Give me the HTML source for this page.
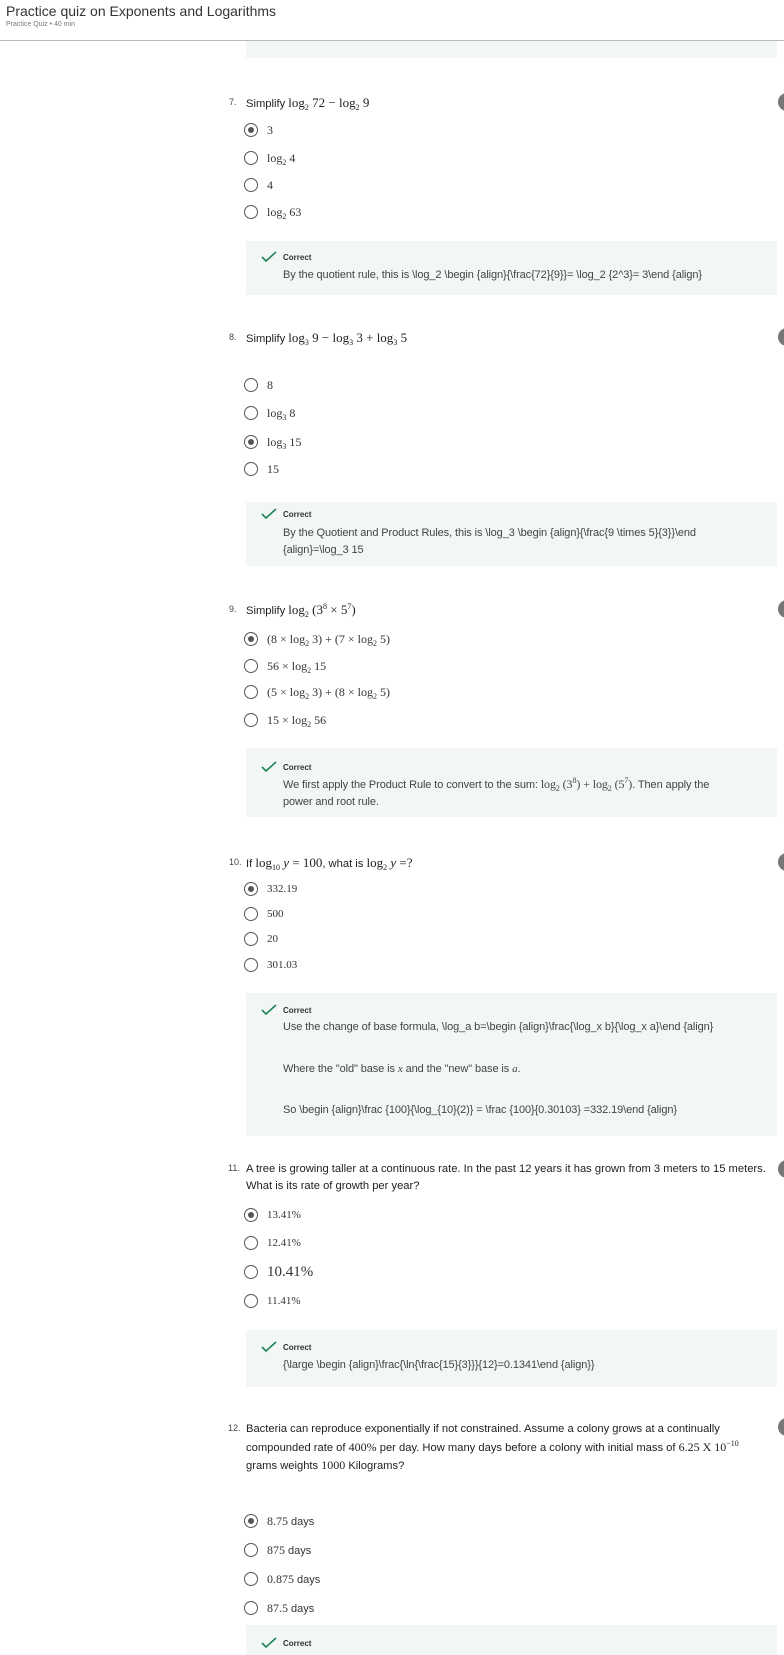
<!DOCTYPE html>
<html><head><meta charset="utf-8"><style>
*{margin:0;padding:0;box-sizing:border-box}
body{width:784px;height:1651px;position:relative;background:#fff;overflow:hidden;font-family:"Liberation Sans",sans-serif;color:#333}
.a{position:absolute;white-space:nowrap;line-height:16px}
.q{font-size:11.2px;color:#222}
.n{font-size:9px;color:#444}
.m{font-family:"Liberation Serif",serif;font-size:13px}
sub{font-size:8px;vertical-align:-3px;line-height:0}
sup{font-size:8px;vertical-align:5px;line-height:0}
.o{position:absolute;left:267px;font-size:12px;line-height:16px;font-family:"Liberation Serif",serif;color:#333;white-space:nowrap}
.o .s{font-family:"Liberation Sans",sans-serif;font-size:11px}
.r{position:absolute;left:244px;width:14px;height:14px;border:1.5px solid #555;border-radius:50%}
.r.on::after{content:"";position:absolute;left:2.5px;top:2.5px;width:6px;height:6px;border-radius:50%;background:#555}
.fb{position:absolute;left:246px;width:531px;background:#f2f7f5}
.ck{position:absolute;left:261px;width:16px;height:12px}
.c{position:absolute;left:283px;font-size:8px;font-weight:bold;color:#333}
.t{position:absolute;left:283px;font-size:11px;letter-spacing:-0.1px;color:#444;line-height:17px;white-space:nowrap}
.g{position:absolute;left:778px;width:18px;height:18px;border-radius:50%;background:#777}
</style></head><body>
<div class="a" style="left:6px;top:3px;font-size:14px;color:#333">Practice quiz on Exponents and Logarithms</div>
<div class="a" style="left:6px;top:17px;font-size:7px;color:#777">Practice Quiz • 40 min</div>
<div class="fb" style="top:41px;height:17px"></div>
<div class="a m" style="left:283px;top:30px;font-size:11px;color:#555">x = 2</div>
<div style="position:absolute;left:0;top:0;width:784px;height:40px;background:#fff;z-index:1"></div>
<div class="a" style="left:6px;top:3px;font-size:14px;color:#333;z-index:2">Practice quiz on Exponents and Logarithms</div>
<div class="a" style="left:6px;top:17px;font-size:7px;color:#777;z-index:2">Practice Quiz • 40 min</div>
<div style="position:absolute;left:0;top:40px;width:784px;height:1px;background:#bbb;z-index:2"></div>

<!-- Q7 -->
<div class="a n" style="left:229px;top:94px">7.</div>
<div class="a q" style="left:246px;top:95px">Simplify <span class="m">log<sub>2</sub> 72 − log<sub>2</sub> 9</span></div>
<div class="g" style="top:93px"></div>
<div class="r on" style="top:123px"></div><div class="o" style="top:122px">3</div>
<div class="r" style="top:151px"></div><div class="o" style="top:150px">log<sub>2</sub> 4</div>
<div class="r" style="top:178px"></div><div class="o" style="top:177px">4</div>
<div class="r" style="top:205px"></div><div class="o" style="top:204px">log<sub>2</sub> 63</div>
<div class="fb" style="top:241px;height:54px"></div>
<svg class="ck" style="top:251px" viewBox="0 0 16 12"><path d="M1 6l4 4 10-9" fill="none" stroke="#1f8354" stroke-width="1.6"/></svg>
<div class="a c" style="top:250px">Correct</div>
<div class="t" style="top:267px">By the quotient rule, this is \log_2 \begin {align}{\frac{72}{9}}= \log_2 {2^3}= 3\end {align}</div>

<!-- Q8 -->
<div class="a n" style="left:229px;top:329px">8.</div>
<div class="a q" style="left:246px;top:330px">Simplify <span class="m">log<sub>3</sub> 9 − log<sub>3</sub> 3 + log<sub>3</sub> 5</span></div>
<div class="g" style="top:328px"></div>
<div class="r" style="top:378px"></div><div class="o" style="top:377px">8</div>
<div class="r" style="top:406px"></div><div class="o" style="top:405px">log<sub>3</sub> 8</div>
<div class="r on" style="top:435px"></div><div class="o" style="top:434px">log<sub>3</sub> 15</div>
<div class="r" style="top:462px"></div><div class="o" style="top:461px">15</div>
<div class="fb" style="top:502px;height:64px"></div>
<svg class="ck" style="top:508px" viewBox="0 0 16 12"><path d="M1 6l4 4 10-9" fill="none" stroke="#1f8354" stroke-width="1.6"/></svg>
<div class="a c" style="top:507px">Correct</div>
<div class="t" style="top:525px">By the Quotient and Product Rules, this is \log_3 \begin {align}{\frac{9 \times 5}{3}}\end<br>{align}=\log_3 15</div>

<!-- Q9 -->
<div class="a n" style="left:229px;top:601px">9.</div>
<div class="a q" style="left:246px;top:602px">Simplify <span class="m">log<sub>2</sub> (3<sup>8</sup> × 5<sup>7</sup>)</span></div>
<div class="g" style="top:600px"></div>
<div class="r on" style="top:632px"></div><div class="o" style="top:631px">(8 × log<sub>2</sub> 3) + (7 × log<sub>2</sub> 5)</div>
<div class="r" style="top:659px"></div><div class="o" style="top:658px">56 × log<sub>2</sub> 15</div>
<div class="r" style="top:685px"></div><div class="o" style="top:684px">(5 × log<sub>2</sub> 3) + (8 × log<sub>2</sub> 5)</div>
<div class="r" style="top:713px"></div><div class="o" style="top:712px">15 × log<sub>2</sub> 56</div>
<div class="fb" style="top:748px;height:69px"></div>
<svg class="ck" style="top:761px" viewBox="0 0 16 12"><path d="M1 6l4 4 10-9" fill="none" stroke="#1f8354" stroke-width="1.6"/></svg>
<div class="a c" style="top:760px">Correct</div>
<div class="t" style="top:776px">We first apply the Product Rule to convert to the sum: <span class="m" style="font-size:12px">log<sub>2</sub> (3<sup>8</sup>) + log<sub>2</sub> (5<sup>7</sup>)</span>. Then apply the<br>power and root rule.</div>

<!-- Q10 -->
<div class="a n" style="left:229px;top:854px">10.</div>
<div class="a q" style="left:246px;top:855px">If <span class="m">log<sub>10</sub> <i>y</i> = 100</span>, what is <span class="m">log<sub>2</sub> <i>y</i> =?</span></div>
<div class="g" style="top:853px"></div>
<div class="r on" style="top:882px"></div><div class="o" style="top:881px;font-size:11px">332.19</div>
<div class="r" style="top:907px"></div><div class="o" style="top:906px;font-size:11px">500</div>
<div class="r" style="top:932px"></div><div class="o" style="top:931px;font-size:11px">20</div>
<div class="r" style="top:958px"></div><div class="o" style="top:957px;font-size:11px">301.03</div>
<div class="fb" style="top:993px;height:143px"></div>
<svg class="ck" style="top:1004px" viewBox="0 0 16 12"><path d="M1 6l4 4 10-9" fill="none" stroke="#1f8354" stroke-width="1.6"/></svg>
<div class="a c" style="top:1003px">Correct</div>
<div class="t" style="top:1019px">Use the change of base formula, \log_a b=\begin {align}\frac{\log_x b}{\log_x a}\end {align}</div>
<div class="t" style="top:1061px">Where the "old" base is <i class="m" style="font-size:11px">x</i> and the "new" base is <i class="m" style="font-size:11px">a</i>.</div>
<div class="t" style="top:1102px">So \begin {align}\frac {100}{\log_{10}(2)} = \frac {100}{0.30103} =332.19\end {align}</div>

<!-- Q11 -->
<div class="a n" style="left:228px;top:1160px">11.</div>
<div class="a q" style="left:246px;top:1161px;line-height:17px">A tree is growing taller at a continuous rate. In the past 12 years it has grown from 3 meters to 15 meters.<br>What is its rate of growth per year?</div>
<div class="g" style="top:1160px"></div>
<div class="r on" style="top:1208px"></div><div class="o" style="top:1207px;font-size:11px">13.41%</div>
<div class="r" style="top:1236px"></div><div class="o" style="top:1235px;font-size:11px">12.41%</div>
<div class="r" style="top:1265px"></div><div class="o" style="top:1263px;font-size:15px;line-height:18px">10.41%</div>
<div class="r" style="top:1294px"></div><div class="o" style="top:1293px;font-size:11px">11.41%</div>
<div class="fb" style="top:1330px;height:57px"></div>
<svg class="ck" style="top:1341px" viewBox="0 0 16 12"><path d="M1 6l4 4 10-9" fill="none" stroke="#1f8354" stroke-width="1.6"/></svg>
<div class="a c" style="top:1340px">Correct</div>
<div class="t" style="top:1357px">{\large \begin {align}\frac{\ln{\frac{15}{3}}}{12}=0.1341\end {align}}</div>

<!-- Q12 -->
<div class="a n" style="left:228px;top:1420px">12.</div>
<div class="a q" style="left:246px;top:1421px;line-height:17.5px">Bacteria can reproduce exponentially if not constrained. Assume a colony grows at a continually<br>compounded rate of <span class="m" style="font-size:12px">400%</span> per day. How many days before a colony with initial mass of <span class="m" style="font-size:12px">6.25 X 10<sup>−10</sup></span><br>grams weights <span class="m" style="font-size:12px">1000</span> Kilograms?</div>
<div class="g" style="top:1418px"></div>
<div class="r on" style="top:1514px"></div><div class="o" style="top:1513px">8.75 <span class="s">days</span></div>
<div class="r" style="top:1543px"></div><div class="o" style="top:1542px">875 <span class="s">days</span></div>
<div class="r" style="top:1572px"></div><div class="o" style="top:1571px">0.875 <span class="s">days</span></div>
<div class="r" style="top:1601px"></div><div class="o" style="top:1600px">87.5 <span class="s">days</span></div>
<div class="fb" style="top:1625px;height:30px"></div>
<svg class="ck" style="top:1637px" viewBox="0 0 16 12"><path d="M1 6l4 4 10-9" fill="none" stroke="#1f8354" stroke-width="1.6"/></svg>
<div class="a c" style="top:1636px">Correct</div>
</body></html>
